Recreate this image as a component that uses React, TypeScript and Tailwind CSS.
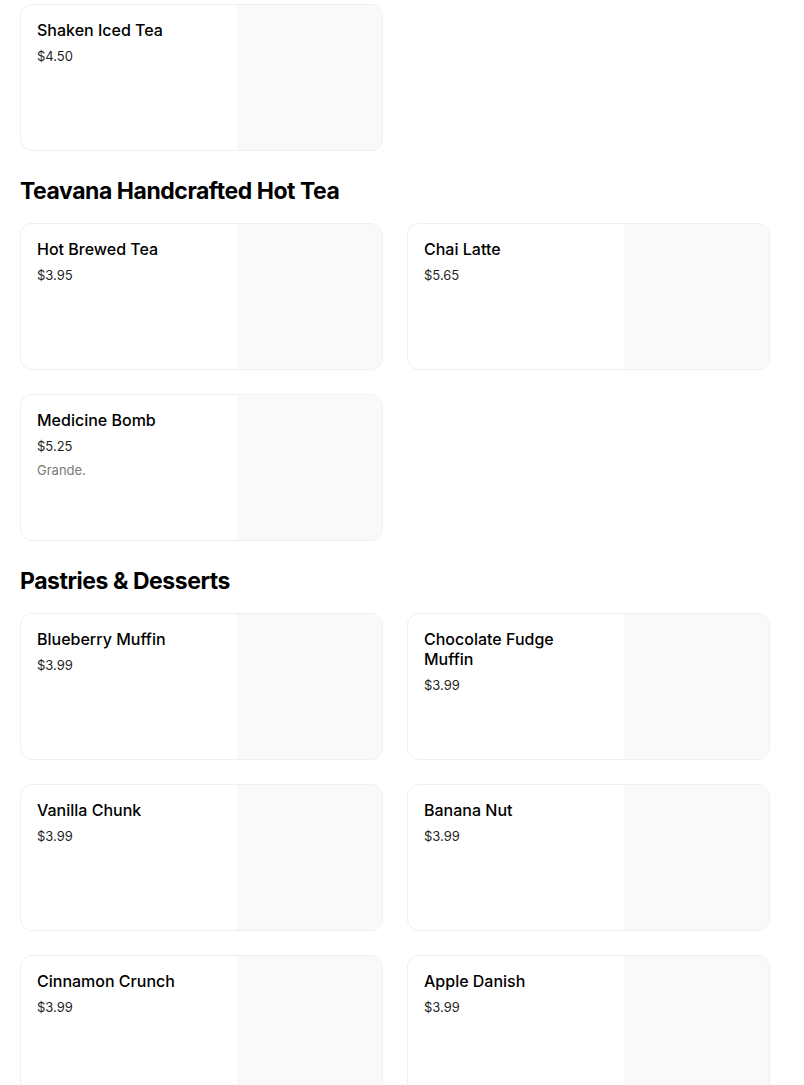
import React from 'react';

type Item = { name: string; price: string; description?: string };
type Section = { title?: string; items: Item[] };

const sections: Section[] = [
  { items: [{ name: 'Shaken Iced Tea', price: '$4.50' }] },
  {
    title: 'Teavana Handcrafted Hot Tea',
    items: [
      { name: 'Hot Brewed Tea', price: '$3.95' },
      { name: 'Chai Latte', price: '$5.65' },
      { name: 'Medicine Bomb', price: '$5.25', description: 'Grande.' },
    ],
  },
  {
    title: 'Pastries & Desserts',
    items: [
      { name: 'Blueberry Muffin', price: '$3.99' },
      { name: 'Chocolate Fudge Muffin', price: '$3.99' },
      { name: 'Vanilla Chunk', price: '$3.99' },
      { name: 'Banana Nut', price: '$3.99' },
      { name: 'Cinnamon Crunch', price: '$3.99' },
      { name: 'Apple Danish', price: '$3.99' },
    ],
  },
];

const MenuCard: React.FC<{ item: Item }> = ({ item }) => (
  <div className="flex h-[147px] overflow-hidden rounded-xl border border-[#efefef] bg-white">
    <div className="flex-1 min-w-0 pl-4 pr-8 pt-[15px]">
      <div className="text-base leading-5 font-medium text-black">{item.name}</div>
      <div className="mt-[6px] text-[13px] leading-5 text-[#1f1f1f]">{item.price}</div>
      {item.description && (
        <div className="mt-1 text-[13px] leading-5 text-[#7a7a7a]">{item.description}</div>
      )}
    </div>
    <div className="w-[145px] h-[145px] shrink-0 bg-[#f9f9f9]" />
  </div>
);

export default function App() {
  return (
    <div
      className="min-h-screen bg-white px-5 pt-1 w-[790px]"
      style={{ fontFamily: 'Inter, "Noto Sans", Arial, sans-serif' }}
    >
      {sections.map((section, i) => (
        <section key={i}>
          {section.title && (
            <h2 className="mt-6 mb-4 text-[23px] leading-8 font-bold tracking-[-0.02em] text-black">
              {section.title}
            </h2>
          )}
          <div className="grid grid-cols-2 gap-6">
            {section.items.map((item) => (
              <MenuCard key={item.name} item={item} />
            ))}
          </div>
        </section>
      ))}
    </div>
  );
}
